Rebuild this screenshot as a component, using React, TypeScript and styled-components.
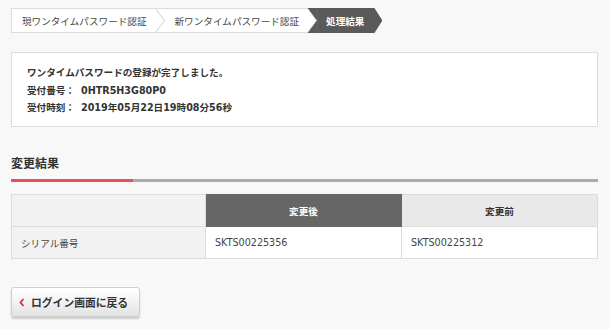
import * as React from 'react';
import styled, { createGlobalStyle } from 'styled-components';

const GlobalStyle = createGlobalStyle`
  html, body {
    margin: 0;
    padding: 0;
    background: #f8f8f8;
  }
  body {
    font-family: "DejaVu Sans", "Noto Sans CJK JP", sans-serif;
    color: #333;
  }
`;

const Page = styled.div`
  width: 610px;
  box-sizing: border-box;
  padding: 8px 12px 12px 11px;
`;

const Steps = styled.div`
  display: flex;
  height: 25px;
`;

const Step = styled.div<{ $active?: boolean; $first?: boolean }>`
  display: flex;
  align-items: center;
  box-sizing: border-box;
  font-size: 9.6px;
  white-space: nowrap;
  color: ${(p) => (p.$active ? '#fff' : '#444')};
  font-weight: ${(p) => (p.$active ? 'bold' : 'normal')};
  background: ${(p) => (p.$active ? '#5a5a5a' : '#fff')};
  border-top: ${(p) => (p.$active ? 'none' : '1px solid #dcdcdc')};
  border-bottom: ${(p) => (p.$active ? 'none' : '1px solid #dcdcdc')};
  border-left: ${(p) => (p.$first ? '1px solid #dcdcdc' : 'none')};
  padding: ${(p) => (p.$active ? '0 18px 0 9px' : p.$first ? '0 8px 0 10px' : '0 8px 0 10px')};
  clip-path: ${(p) =>
    p.$active
      ? 'polygon(0 0, calc(100% - 8px) 0, 100% 50%, calc(100% - 8px) 100%, 0 100%)'
      : 'none'};
`;

const SepBox = styled.svg<{ $next: string }>`
  display: block;
  flex: none;
  background: ${(p) => p.$next};
`;

const Separator = ({ next }: { next: string }) => (
  <SepBox $next={next} width="10" height="25" viewBox="0 0 10 25">
    {next === '#fff' && <line x1="0" y1="0.5" x2="10" y2="0.5" stroke="#dcdcdc" />}
    {next === '#fff' && <line x1="0" y1="24.5" x2="10" y2="24.5" stroke="#dcdcdc" />}
    <polygon points="0,0 0.5,0 9.5,12.5 0.5,25 0,25" fill="#fff" />
    <polyline points="0,0.5 0.5,0.5 9.5,12.5 0.5,24.5 0,24.5" fill="none" stroke="#d0d0d0" strokeWidth="1" />
  </SepBox>
);

const InfoBox = styled.div`
  margin-top: 19px;
  background: #fff;
  border: 1px solid #dcdcdc;
  padding: 11px 15px 10px;
  font-size: 9.6px;
  font-weight: bold;
  line-height: 17px;
  color: #333;
`;

const InfoLead = styled.div`
  margin-bottom: 1px;
`;

const InfoRow = styled.div`
  display: flex;
`;

const InfoLabel = styled.span`
  width: 54px;
`;

const SectionTitle = styled.h2`
  margin: 29px 0 0;
  font-size: 12px;
  line-height: 16px;
  font-weight: bold;
  color: #333;
`;

const Rule = styled.div`
  margin-top: 7px;
  height: 3px;
  background: #ababab;
  display: flex;
`;

const RuleAccent = styled.div`
  width: 122px;
  background: #e8515b;
`;

const Table = styled.table`
  margin-top: 12px;
  width: 100%;
  border-collapse: collapse;
  table-layout: fixed;
  font-size: 9.6px;
  color: #444;
`;

const HeadCell = styled.th<{ $tone: 'blank' | 'dark' | 'light' }>`
  height: 31px;
  padding: 0;
  border: 1px solid #dcdcdc;
  font-weight: bold;
  text-align: center;
  background: ${(p) => (p.$tone === 'dark' ? '#666' : p.$tone === 'light' ? '#e9e9e9' : '#f2f2f2')};
  color: ${(p) => (p.$tone === 'dark' ? '#fff' : '#333')};
  border-color: ${(p) => (p.$tone === 'dark' ? '#666' : '#dcdcdc')};
`;

const Cell = styled.td<{ $label?: boolean }>`
  height: 31px;
  padding: 0 0 0 9px;
  border: 1px solid #dcdcdc;
  background: ${(p) => (p.$label ? '#f2f2f2' : '#fff')};
`;

const BackButton = styled.button`
  margin-top: 28px;
  display: flex;
  align-items: center;
  gap: 6px;
  width: 129px;
  height: 30px;
  box-sizing: border-box;
  padding: 0 0 0 7px;
  border: 1px solid #cfcfcf;
  border-radius: 3px;
  background: linear-gradient(#ffffff, #f2f2f2 50%, #e2e2e2);
  box-shadow: 0 2px 2px rgba(0, 0, 0, 0.18);
  font-family: "DejaVu Sans", "Noto Sans CJK JP", sans-serif;
  font-size: 10.8px;
  font-weight: bold;
  color: #333;
  cursor: pointer;
`;

const Chevron = () => (
  <svg width="6" height="9" viewBox="0 0 6 9">
    <polyline points="4.5,1 1.5,4.5 4.5,8" fill="none" stroke="#d8323f" strokeWidth="1.8" />
  </svg>
);

const App = () => {
  return (
    <Page>
      <GlobalStyle />
      <Steps>
        <Step $first>現ワンタイムパスワード認証</Step>
        <Separator next="#fff" />
        <Step>新ワンタイムパスワード認証</Step>
        <Separator next="#5a5a5a" />
        <Step $active>処理結果</Step>
      </Steps>

      <InfoBox>
        <InfoLead>ワンタイムパスワードの登録が完了しました。</InfoLead>
        <InfoRow>
          <InfoLabel>受付番号：</InfoLabel>
          <span>0HTR5H3G80P0</span>
        </InfoRow>
        <InfoRow>
          <InfoLabel>受付時刻：</InfoLabel>
          <span>2019年05月22日19時08分56秒</span>
        </InfoRow>
      </InfoBox>

      <SectionTitle>変更結果</SectionTitle>
      <Rule>
        <RuleAccent />
      </Rule>

      <Table>
        <colgroup>
          <col style={{ width: 194 }} />
          <col style={{ width: 196 }} />
          <col />
        </colgroup>
        <thead>
          <tr>
            <HeadCell $tone="blank" />
            <HeadCell $tone="dark">変更後</HeadCell>
            <HeadCell $tone="light">変更前</HeadCell>
          </tr>
        </thead>
        <tbody>
          <tr>
            <Cell $label>シリアル番号</Cell>
            <Cell>SKTS00225356</Cell>
            <Cell>SKTS00225312</Cell>
          </tr>
        </tbody>
      </Table>

      <BackButton type="button">
        <Chevron />
        ログイン画面に戻る
      </BackButton>
    </Page>
  );
};

export default App;
